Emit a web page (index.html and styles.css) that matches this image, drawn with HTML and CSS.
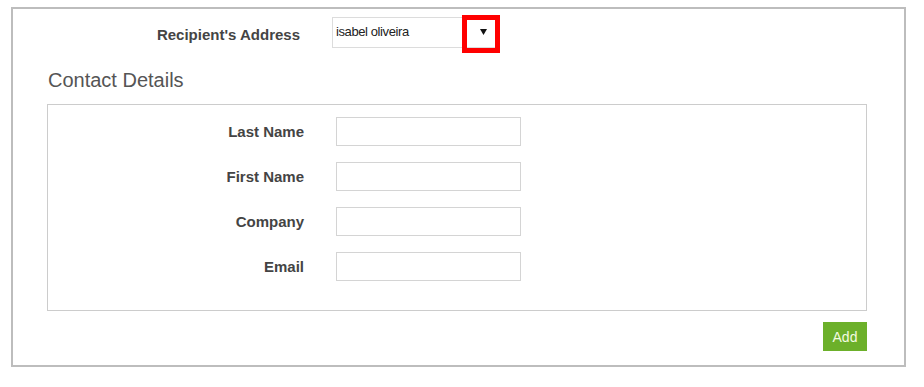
FILE: index.html
```html
<!DOCTYPE html>
<html>
<head>
<meta charset="utf-8">
<link rel="stylesheet" href="styles.css">
</head>
<body>
<div class="panel">
  <div class="recipient-row">
    <label class="recipient-label">Recipient's Address</label>
    <div class="select">
      <span class="select-value">isabel oliveira</span>
      <svg class="select-arrow" width="7" height="6" viewBox="0 0 7 6"><polygon points="0,0 7,0 3.5,6" fill="#111111"/></svg>
      <span class="highlight"></span>
    </div>
  </div>
  <h2 class="section-title">Contact Details</h2>
  <div class="details-box">
    <div class="field-row"><label class="field-label">Last Name</label><input class="field-input" type="text"></div>
    <div class="field-row"><label class="field-label">First Name</label><input class="field-input" type="text"></div>
    <div class="field-row"><label class="field-label">Company</label><input class="field-input" type="text"></div>
    <div class="field-row"><label class="field-label">Email</label><input class="field-input" type="text"></div>
  </div>
  <div class="actions">
    <button class="add-btn" type="button">Add</button>
  </div>
</div>
</body>
</html>
```

FILE: styles.css
```css
html, body {
  margin: 0;
  padding: 0;
  background: #ffffff;
}
body {
  font-family: "Liberation Sans", Arial, sans-serif;
  color: #444444;
}
.panel {
  box-sizing: border-box;
  margin: 7px 0 0 11px;
  width: 895px;
  height: 360px;
  border: 2px solid #bdbdbd;
  padding: 8px 37px 0 34px;
}
.recipient-row {
  display: flex;
  align-items: center;
  gap: 32px;
}
.recipient-label {
  width: 253px;
  text-align: right;
  font-weight: bold;
  font-size: 15px;
  color: #444444;
  padding-top: 3px;
}
.select {
  position: relative;
  box-sizing: border-box;
  width: 164px;
  height: 31px;
  border: 1px solid #dcdcdc;
  display: flex;
  align-items: center;
  padding-left: 3px;
}
.select-value {
  font-size: 13px;
  letter-spacing: -0.4px;
  color: #222222;
  padding-bottom: 2px;
}
.select-arrow {
  position: absolute;
  left: 147px;
  top: 11px;
}
.highlight {
  position: absolute;
  left: 129px;
  top: -3px;
  width: 38px;
  height: 38px;
  box-sizing: border-box;
  border: 5px solid #ff0000;
}
.section-title {
  margin: 20px 0 12px 1px;
  font-size: 20px;
  line-height: 24px;
  font-weight: normal;
  color: #555555;
}
.details-box {
  border: 1px solid #cccccc;
  padding: 12px 0 29px;
  display: flex;
  flex-direction: column;
  gap: 16px;
}
.field-row {
  display: flex;
  align-items: center;
  gap: 32px;
}
.field-label {
  width: 256px;
  text-align: right;
  font-weight: bold;
  font-size: 15px;
  color: #444444;
}
.field-input {
  box-sizing: border-box;
  width: 185px;
  height: 29px;
  border: 1px solid #d4d4d4;
  margin: 0;
  padding: 0 4px;
  outline: none;
}
.actions {
  display: flex;
  justify-content: flex-end;
  margin-top: 11px;
}
.add-btn {
  width: 44px;
  height: 29px;
  border: none;
  background: #6cb02a;
  color: #f4fbe0;
  font-family: "Liberation Sans", Arial, sans-serif;
  font-size: 14px;
  padding: 0;
}
```
